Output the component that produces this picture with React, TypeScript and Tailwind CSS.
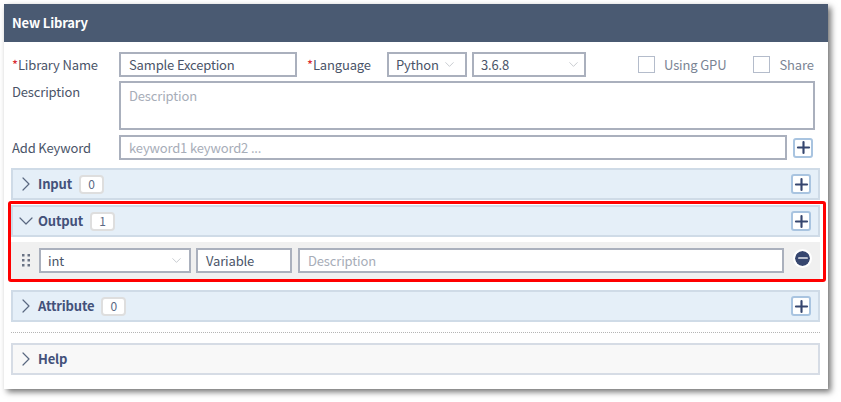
import { ChevronDown, ChevronRight, Minus, Plus } from 'lucide-react';

function AddButton({ className = '' }: { className?: string }) {
  return (
    <button className={`w-5 h-5 shrink-0 flex items-center justify-center bg-white rounded-[3px] border-2 border-[#a9c4e0] ${className}`}>
      <Plus className="w-[19px] h-[19px] shrink-0 text-[#36466f]" strokeWidth={2.7} />
    </button>
  );
}

function Section({ title, count, open = false }: { title: string; count: number; open?: boolean }) {
  return (
    <div className="h-[32px] flex items-center bg-[#e5eff8] border-2 border-[#cfdbe7] pl-[1px] pr-[7px]">
      {open ? (
        <ChevronDown className="w-[24px] h-[24px] text-[#5a6880]" strokeWidth={1.2} />
      ) : (
        <ChevronRight className="w-[24px] h-[24px] text-[#5a6880]" strokeWidth={1.2} />
      )}
      <span className="text-[13px] tracking-[-0.15px] font-bold text-[#43517a]">{title}</span>
      <span className="ml-[7px] w-[25px] h-[19px] flex items-center justify-center bg-white border-2 border-[#dedede] rounded-[4px] text-[12px] text-[#5b6a85]">
        {count}
      </span>
      <AddButton className="ml-auto" />
    </div>
  );
}

function Select({ value, className }: { value: string; className: string }) {
  return (
    <div className={`shrink-0 flex items-center justify-between bg-white border-2 border-[#aab0bd] text-[13px] tracking-[-0.15px] text-[#4a5468] pl-[7px] ${className}`}>
      <span>{value}</span>
      <ChevronDown className="w-[15px] h-[15px] text-[#b0b4bc]" strokeWidth={1.1} />
    </div>
  );
}

function CheckOption({ label, className }: { label: string; className: string }) {
  return (
    <label className={`flex items-center gap-[9px] whitespace-nowrap text-[13px] tracking-[-0.15px] text-[#7a8494] ${className}`}>
      <span className="w-[17px] h-[17px] shrink-0 bg-white border border-[#b4bccb]" />
      {label}
    </label>
  );
}

export default function App() {
  return (
    <div className="w-[841px] h-[402px] bg-white pt-[4px] pl-[4px] font-['Noto_Sans_CJK_KR','Noto_Sans',sans-serif] overflow-hidden">
      <div className="w-[824px] h-[385px] bg-white shadow-[3px_3px_6px_rgba(0,0,0,0.55)]">
        <div className="h-[38px] bg-[#4a5a72] flex items-center pl-[8px] text-[13px] tracking-[-0.15px] font-bold text-white">New Library</div>

        <div className="pt-[10px] pl-[7px] pr-[8px]">
          <div className="flex items-center h-[25px] text-[13px] tracking-[-0.15px] text-[#4a5468] whitespace-nowrap">
            <span className="w-[108px] pl-[1px] shrink-0"><span className="text-[#d9282f]">*</span>Library Name</span>
            <div className="w-[178px] h-[25px] shrink-0 flex items-center bg-white border-2 border-[#aab0bd] pl-[8px]">Sample Exception</div>
            <span className="w-[90px] pl-[10px] shrink-0"><span className="text-[#d9282f]">*</span>Language</span>
            <Select value="Python" className="w-[80px] h-[25px] pr-[8px]" />
            <Select value="3.6.8" className="w-[114px] h-[25px] ml-[5px] pr-[3px]" />
            <CheckOption label="Using GPU" className="ml-[52px]" />
            <CheckOption label="Share" className="ml-[27px]" />
          </div>

          <div className="flex mt-[4px] text-[13px] tracking-[-0.15px] text-[#4a5468]">
            <span className="w-[108px] pl-[1px] pt-[1px] leading-[20px]">Description</span>
            <div className="w-[696px] h-[49px] bg-white border-2 border-[#aab0bd] pl-[8px] pt-[3px] text-[#a7adb8] leading-[20px]">Description</div>
          </div>

          <div className="flex items-center mt-[5px] text-[13px] tracking-[-0.15px] text-[#4a5468]">
            <span className="w-[108px] pl-[1px]">Add Keyword</span>
            <div className="w-[668px] h-[25px] flex items-center bg-white border-2 border-[#aab0bd] pl-[8px] text-[#a7adb8]">keyword1 keyword2 ...</div>
            <AddButton className="ml-[6px]" />
          </div>

          <div className="mt-[8px]">
            <Section title="Input" count={0} />
          </div>

          {/* highlighted output block */}
          <div className="relative mt-[5px]">
            <Section title="Output" count={1} open />
            <div className="h-[38px] mt-[5px] bg-[#f0f0f0] flex items-center pl-[11px] pb-[1px] text-[13px] tracking-[-0.15px] text-[#4a5468]">
              <svg width="8" height="13" viewBox="0 0 8 13" className="shrink-0 text-[#6a7384]" fill="currentColor">
                <rect x="0" y="0" width="2.5" height="2.5" />
                <rect x="5.5" y="0" width="2.5" height="2.5" />
                <rect x="0" y="5" width="2.5" height="2.5" />
                <rect x="5.5" y="5" width="2.5" height="2.5" />
                <rect x="0" y="10" width="2.5" height="2.5" />
                <rect x="5.5" y="10" width="2.5" height="2.5" />
              </svg>
              <Select value="int" className="w-[152px] h-[25px] ml-[9px] pr-[5px]" />
              <div className="w-[96px] h-[25px] ml-[5px] shrink-0 flex items-center bg-white border-2 border-[#aab0bd] pl-[8px]">Variable</div>
              <div className="w-[486px] h-[25px] ml-[6px] shrink-0 flex items-center bg-white border-2 border-[#aab0bd] pl-[8px] text-[#a7adb8]">Description</div>
              <span className="ml-[11px] w-[15px] h-[15px] mb-[5px] shrink-0 rounded-full bg-[#36466f] flex items-center justify-center outline-2 outline-white">
                <Minus className="w-[14px] h-[14px] text-[#e6e8ee]" strokeWidth={3} />
              </span>
            </div>
            <div className="absolute -left-[3px] -right-[6px] -top-[4px] -bottom-[2px] border-[3px] border-[#ff0000] rounded-[3px] pointer-events-none" />
          </div>

          <div className="mt-[10px]">
            <Section title="Attribute" count={0} />
          </div>

          <div className="mt-[10px] border-t border-dotted border-[#b5b5b5]" />

          <div className="mt-[10px] h-[32px] flex items-center bg-[#f8f8f8] border-2 border-[#d6dce5] pl-[1px]">
            <ChevronRight className="w-[24px] h-[24px] text-[#5a6880]" strokeWidth={1.2} />
            <span className="text-[13px] tracking-[-0.15px] font-bold text-[#43517a]">Help</span>
          </div>
        </div>
      </div>
    </div>
  );
}
